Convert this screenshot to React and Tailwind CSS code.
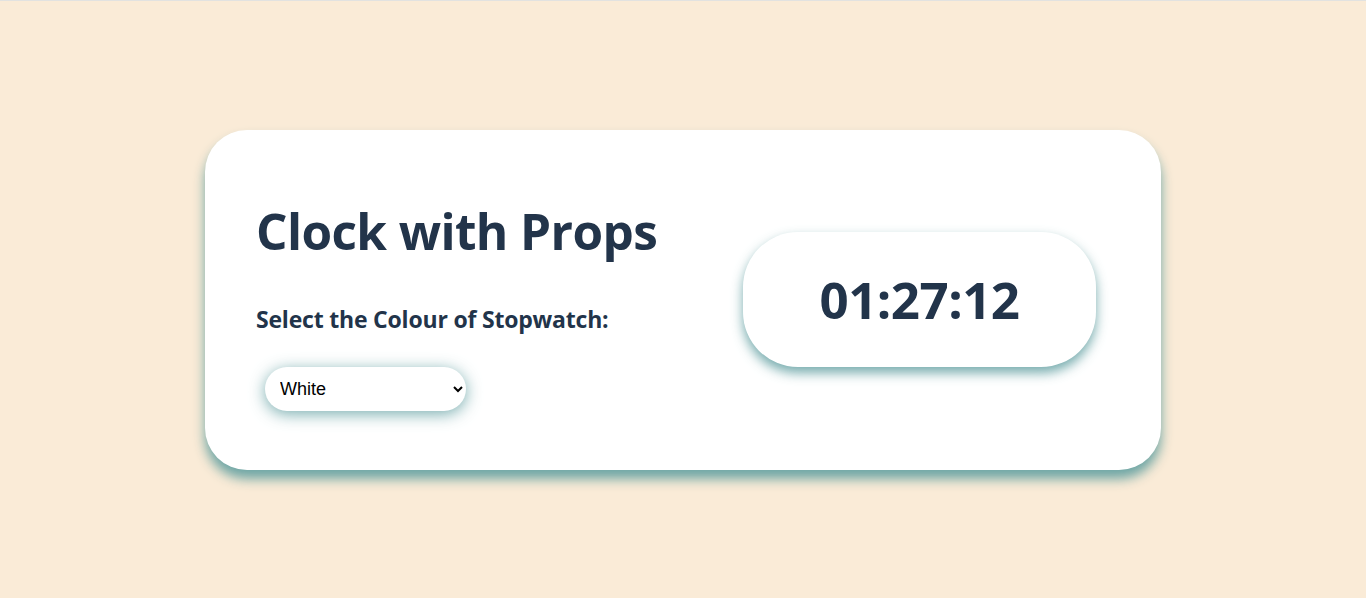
import React, { useState } from "react";

const Clock = ({ time }) => (
  <div className="w-[353px] h-[135px] rounded-[55px] bg-white flex items-center justify-center shadow-[0_6px_12px_rgba(95,158,160,0.85)]">
    <span className="text-[51px] font-bold text-[#22344a] tracking-[-0.5px] leading-none">{time}</span>
  </div>
);

export default function App() {
  const [colour, setColour] = useState("White");

  return (
    <div
      className="min-h-screen bg-[#faebd7] border-t border-[#e2e2e0] flex items-center justify-center"
      style={{ fontFamily: '"Open Sans", "Noto Sans", sans-serif' }}
    >
      <div className="w-[956px] h-[340px] rounded-[42px] bg-white flex items-start justify-between pl-[51px] pr-[65px] pt-[77px] shadow-[0_9px_12px_rgba(95,158,160,0.9)]">
        {/* left column */}
        <div className="flex flex-col items-start">
          <h1 className="text-[49.5px] font-bold text-[#22344a] leading-none tracking-[-0.6px]">
            Clock with Props
          </h1>
          <label className="text-[23px] font-bold text-[#22344a] mt-[52px] leading-none tracking-[-0.2px]">
            Select the Colour of Stopwatch:
          </label>
          <select
            value={colour}
            onChange={(e) => setColour(e.target.value)}
            className="mt-[36px] ml-[9px] w-[201px] h-[44px] rounded-full bg-white pl-[11px] pr-[6px] text-[18px] text-black shadow-[0_3px_16px_rgba(95,158,160,0.85)] outline-none"
            style={{ fontFamily: '"Liberation Sans", Arial, sans-serif', appearance: "auto" }}
          >
            <option>White</option>
            <option>Black</option>
            <option>Red</option>
            <option>Blue</option>
          </select>
        </div>

        {/* right column */}
        <div className="self-center -mt-[77px]">
          <Clock time="01:27:12" />
        </div>
      </div>
    </div>
  );
}
